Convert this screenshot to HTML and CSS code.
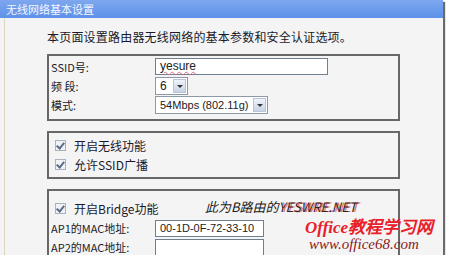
FILE: index.html
```html
<!DOCTYPE html>
<html lang="zh-CN">
<head>
  <meta charset="UTF-8" />
  <title>无线网络基本设置</title>
  <link rel="stylesheet" href="styles.css">
</head>
<body>

<div class="window">
  <div class="title-bar">无线网络基本设置</div>

  <div class="panel">
    <p class="intro">本页面设置路由器无线网络的基本参数和安全认证选项。</p>

    <div class="box basic">
      <div class="row">
        <span class="label">SSID号:</span>
        <span class="field ssid"><span class="spell">yesure</span></span>
      </div>
      <div class="row">
        <span class="label">频&nbsp;段:</span>
        <span class="combo narrow">6<span class="drop"></span></span>
      </div>
      <div class="row">
        <span class="label">模式:</span>
        <span class="combo wide">54Mbps (802.11g)<span class="drop"></span></span>
      </div>
    </div>

    <div class="box switches">
      <div class="row check-row">
        <span class="check"></span>
        <span>开启无线功能</span>
      </div>
      <div class="row check-row">
        <span class="check"></span>
        <span>允许SSID广播</span>
      </div>
    </div>

    <div class="box bridge">
      <div class="row check-row">
        <span class="check"></span>
        <span>开启Bridge功能</span>
      </div>
      <div class="row">
        <span class="label">AP1的MAC地址:</span>
        <span class="field mac">00-1D-0F-72-33-10</span>
      </div>
      <div class="row">
        <span class="label">AP2的MAC地址:</span>
        <span class="field mac"></span>
      </div>
      <div class="note">此为B路由的<span class="ghost">YESWRE.NET</span></div>
    </div>
  </div>

  <div class="watermark">
    <div class="wm-top">Office教程学习网</div>
    <div class="wm-url">www.office68.com</div>
  </div>
</div>

</body>
</html>
```

FILE: styles.css
```css
body {
  margin: 0;
  background: #fff;
  font-family: "Noto Sans CJK SC", "Liberation Sans", sans-serif;
  font-size: 12px;
  color: #1a1a2a;
}

.window {
  position: relative;
  width: 443px;
  height: 255px;
  background: #f4f4f4;
  box-shadow: 2px 2px 1px #6a6a6a;
  overflow: hidden;
}

.title-bar {
  height: 18px;
  line-height: 18px;
  padding-left: 6px;
  background: linear-gradient(#7ea7ee, #5d91ea);
  color: #f4f7ff;
  font-size: 11px;
}

.panel {
  margin-left: 4px;
  height: 237px;
  border-left: 1px solid #ddd5bd;
  padding-left: 42px;
}

.intro {
  margin: 0;
  padding-top: 10px;
  height: 26px;
  line-height: 17px;
  letter-spacing: 0.2px;
}

.box {
  position: relative;
  box-sizing: border-box;
  width: 353px;
  border: 2px solid #676767;
  padding: 1px 0 0 2px;
}

.basic {
  height: 67px;
}

.switches {
  height: 48px;
  margin-top: 10px;
  padding-top: 3px;
}

.bridge {
  height: 70px;
  margin-top: 10px;
  padding-top: 8px;
}

.row {
  display: flex;
  align-items: center;
  height: 19px;
}

.label {
  width: 104px;
  font-size: 11px;
}

.check-row {
  gap: 8px;
  padding-left: 4px;
}

.check {
  width: 9px;
  height: 9px;
  border: 1px solid #a9b3bf;
  background: #f0f2f4;
  position: relative;
}

.check::after {
  content: "";
  position: absolute;
  left: 2px;
  top: 0px;
  width: 3px;
  height: 6px;
  border: solid #5b6c8a;
  border-width: 0 2px 2px 0;
  transform: rotate(40deg);
}

.field {
  box-sizing: border-box;
  height: 17px;
  line-height: 15px;
  background: #fff;
  border: 1px solid #6f7f8f;
  padding-left: 4px;
  font-family: "Liberation Sans", sans-serif;
  font-size: 11px;
  white-space: nowrap;
  color: #222;
}

.ssid {
  width: 173px;
  font-size: 12px;
}

.spell {
  text-decoration: underline wavy #d07080;
  text-decoration-thickness: 1px;
}

.mac {
  width: 109px;
  margin-top: 2px;
}

.combo {
  box-sizing: border-box;
  display: flex;
  align-items: center;
  justify-content: space-between;
  height: 18px;
  background: #fff;
  border: 1px solid #8c9aa8;
  padding: 0 1px 0 4px;
  font-family: "Liberation Sans", sans-serif;
  font-size: 11px;
  white-space: nowrap;
  color: #222;
}

.narrow {
  width: 33px;
  font-size: 12px;
}

.wide {
  width: 113px;
}

.drop {
  position: relative;
  width: 13px;
  height: 14px;
  background: linear-gradient(#eef2fa, #c9d3e6);
  border: 1px solid #b9c4d8;
  box-sizing: border-box;
}

.drop::after {
  content: "";
  position: absolute;
  left: 3px;
  top: 5px;
  border-left: 3px solid transparent;
  border-right: 3px solid transparent;
  border-top: 3px solid #333;
}

.note {
  position: absolute;
  left: 156px;
  top: 8px;
  font-style: italic;
  font-size: 13px;
  line-height: 16px;
  white-space: nowrap;
  color: #222;
}

.ghost {
  color: #3a2020;
  text-shadow: 2px 0 0 #e07070;
}

.watermark {
  position: absolute;
  left: 305px;
  top: 219px;
  font-family: "Liberation Serif", serif;
  font-style: italic;
  line-height: 17px;
}

.wm-top {
  color: #e8202a;
  font-size: 17px;
  font-weight: bold;
}

.wm-url {
  color: #8a1a1a;
  font-size: 15px;
  padding-left: 4px;
}
```
